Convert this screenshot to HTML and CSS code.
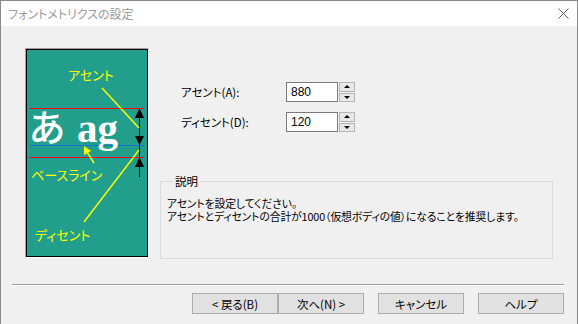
FILE: index.html
```html
<!DOCTYPE html>
<html lang="ja">

<head>
    <meta charset="UTF-8">
    <title>フォントメトリクスの設定</title>
    <link rel="stylesheet" href="styles.css">
</head>

<body>
    <div class="window">
        <div class="titlebar">
            <span class="title">フォントメトリクスの設定</span>
            <svg class="close" width="11" height="11" viewBox="0 0 11 11">
                <path d="M0.5 0.5 L10.5 10.5 M10.5 0.5 L0.5 10.5" stroke="#5f5f5f" stroke-width="1" fill="none" />
            </svg>
        </div>

        <div class="body">
            <div class="content">
                <div class="preview">
                    <div class="preview-inner">
                        <svg width="120" height="206" viewBox="0 0 120 206">
                            <!-- 基準線 -->
                            <line x1="2" y1="58.5" x2="117" y2="58.5" stroke="#ff0000" />
                            <line x1="2" y1="95.5" x2="117" y2="95.5" stroke="#1a6fd0" />
                            <line x1="2" y1="107.5" x2="117" y2="107.5" stroke="#ff0000" />

                            <text x="2" y="92" class="sample-jp">あ</text>
                            <text x="50" y="92" class="sample-en">ag</text>

                            <!-- 矢印 -->
                            <line x1="112.5" y1="60" x2="112.5" y2="127" stroke="#000" />
                            <path d="M112.5 58 L108 68 L117 68 Z" fill="#000" />
                            <path d="M112.5 95 L108 86 L117 86 Z" fill="#000" />
                            <path d="M112.5 107 L108 117 L117 117 Z" fill="#000" />

                            <!-- 引き出し線 -->
                            <line x1="75" y1="38" x2="112" y2="78" stroke="#ffff00" stroke-width="1.4" />
                            <line x1="112" y1="100" x2="57" y2="172" stroke="#ffff00" stroke-width="1.4" />
                            <line x1="67" y1="113" x2="60" y2="102" stroke="#ffff00" stroke-width="1.4" />
                            <path d="M57 96 L57 105 L64 101 Z" fill="#ffff00" />

                            <text x="41" y="30" class="label">アセント</text>
                            <text x="4" y="130" class="label">ベースライン</text>
                            <text x="8" y="190" class="label">ディセント</text>
                        </svg>
                    </div>
                </div>

                <div class="settings">
                    <div class="row">
                        <label>アセント(A):</label>
                        <div class="spin">
                            <div class="spin-input">880</div>
                            <div class="spin-btns">
                                <span class="up"></span>
                                <span class="down"></span>
                            </div>
                        </div>
                    </div>
                    <div class="row">
                        <label>ディセント(D):</label>
                        <div class="spin">
                            <div class="spin-input">120</div>
                            <div class="spin-btns">
                                <span class="up"></span>
                                <span class="down"></span>
                            </div>
                        </div>
                    </div>

                    <fieldset class="group">
                        <legend>説明</legend>
                        <p>アセントを設定してください。</p>
                        <p>アセントとディセントの合計が1000（仮想ボディの値）になることを推奨します。</p>
                    </fieldset>
                </div>
            </div>

            <div class="separator"></div>

            <div class="buttons">
                <div class="pair">
                    <button>&lt; 戻る(B)</button>
                    <button>次へ(N) &gt;</button>
                </div>
                <button>キャンセル</button>
                <button>ヘルプ</button>
            </div>
        </div>
    </div>
</body>

</html>
```

FILE: styles.css
```css
* {
    margin: 0;
    padding: 0;
    box-sizing: border-box;
}

body {
    width: 578px;
    height: 324px;
    overflow: hidden;
    font-family: "Noto Sans CJK JP", "Noto Sans", sans-serif;
    font-size: 11px;
    font-feature-settings: "palt";
    color: #000;
    background: #f0f0f0;
}

.window {
    width: 578px;
    height: 324px;
    border: 1px solid #8a8a8a;
    border-bottom: none;
    display: flex;
    flex-direction: column;
}

.titlebar {
    height: 25px;
    flex-shrink: 0;
    background: #fff;
    display: flex;
    align-items: center;
    justify-content: space-between;
    padding: 0 8px 0 7px;
}

.title {
    font-size: 12px;
    color: #9a9a9a;
    line-height: 14px;
}

.body {
    flex: 1;
    background: #f0f0f0;
}

.content {
    display: flex;
    padding: 22px 0 0 24px;
}

/* プレビュー */
.preview {
    width: 124px;
    height: 210px;
    border: 1px solid;
    border-color: #a0a0a0 #fff #fff #a0a0a0;
}

.preview-inner {
    width: 122px;
    height: 208px;
    border: 1px solid #000;
    background: #229f8c;
}

.preview-inner svg {
    display: block;
}

.sample-jp {
    font-family: "Noto Sans CJK JP", sans-serif;
    font-size: 37px;
    font-weight: 500;
    fill: #fff;
}

.sample-en {
    font-family: "Liberation Serif", serif;
    font-size: 41px;
    font-weight: 700;
    fill: #fff;
}

.label {
    font-family: "Noto Sans CJK JP", sans-serif;
    font-size: 13px;
    fill: #ffff00;
}

/* 設定欄 */
.settings {
    width: 393px;
    margin-left: 11px;
    padding-top: 34px;
}

.row {
    display: flex;
    align-items: center;
    height: 20px;
    margin-bottom: 11px;
    padding-left: 21px;
}

.row + .row {
    margin-top: -1px;
}

.row label {
    width: 105px;
    font-size: 11.5px;
}

.spin {
    display: flex;
    height: 20px;
}

.spin-input {
    width: 52px;
    height: 20px;
    border: 1px solid #7a7a7a;
    background: #fff;
    padding-left: 4px;
    line-height: 18px;
    font-family: "Liberation Sans", sans-serif;
    font-size: 12px;
}

.spin-btns {
    width: 16px;
    height: 20px;
    margin-left: 1px;
    display: flex;
    flex-direction: column;
    gap: 1px;
}

.spin-btns span {
    flex: 1;
    background: #e8e8e8;
    border: 1px solid #b5b5b5;
    display: flex;
    align-items: center;
    justify-content: center;
}

.spin-btns .up::after {
    content: "";
    border: 3px solid transparent;
    border-bottom: 3px solid #000;
    border-top: none;
}

.spin-btns .down::after {
    content: "";
    border: 3px solid transparent;
    border-top: 3px solid #000;
    border-bottom: none;
}

.group {
    margin-top: 42px;
    height: 85px;
    border: 1px solid #d9d9d9;
    padding: 9px 6px 4px;
}

.group legend {
    margin-left: 6px;
    padding: 0 2px;
    line-height: 14px;
    font-size: 11.5px;
}

.group p {
    line-height: 13px;
    font-size: 10.8px;
    letter-spacing: -0.1px;
}

.separator {
    margin: 25px 0 0 11px;
    width: 552px;
    height: 2px;
    border-top: 1px solid #a0a0a0;
    border-bottom: 1px solid #fff;
}

.buttons {
    display: flex;
    justify-content: flex-end;
    gap: 14px;
    margin-top: 7px;
    padding-right: 13px;
}

.pair {
    display: flex;
}

.buttons button {
    width: 86px;
    height: 21px;
    background: #e1e1e1;
    border: 1px solid #adadad;
    font-family: "Noto Sans CJK JP", sans-serif;
    font-size: 11.5px;
    font-feature-settings: "palt";
    color: #000;
}
```
